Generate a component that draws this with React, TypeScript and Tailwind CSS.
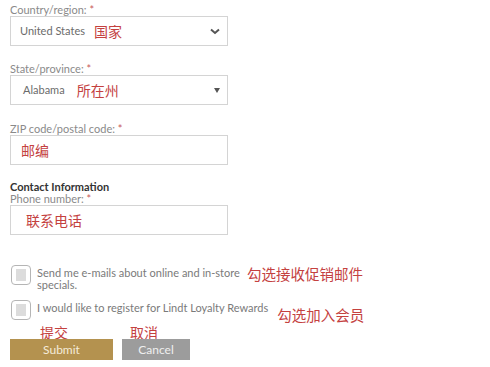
import React from 'react';

const label = "text-[11px] leading-[12px] text-[#8a8a8a]";
const box = "h-[30px] w-[218px] border border-[#d4d4d4] bg-white flex items-center";
const cn = "font-['Noto_Sans_CJK_SC',sans-serif] text-[#c4413f]";

const Req = () => <span className="text-[#c85a5a]"> *</span>;

const Checkbox = () => (
  <div className="w-[20px] h-[20px] shrink-0 rounded-[4px] border border-[#b5b5b5] bg-white flex items-center justify-center">
    <div className="w-[10px] h-[12px] bg-[#dcdcdc]" />
  </div>
);

export default function App() {
  return (
    <div className="w-[490px] h-[367px] bg-white pl-[10px] pt-[4px] font-['Lato',sans-serif] overflow-hidden">
      {/* Country */}
      <div className={label}>Country/region:<Req /></div>
      <div className={box + " pl-[9px] pr-[7px]"}>
        <span className="text-[11px] text-[#6b6b6b]">United States</span>
        <span className={cn + " text-[14px] ml-[9px]"}>国家</span>
        <svg className="ml-auto" width="10" height="7" viewBox="0 0 10 7">
          <path d="M1 1.5 L5 5 L9 1.5" fill="none" stroke="#555" strokeWidth="2" />
        </svg>
      </div>

      {/* State */}
      <div className={label + " mt-[17px]"}>State/province:<Req /></div>
      <div className={box + " pl-[12px] pr-[7px]"}>
        <span className="text-[11px] text-[#6b6b6b]">Alabama</span>
        <span className={cn + " text-[14px] ml-[12px]"}>所在州</span>
        <svg className="ml-auto" width="6" height="5" viewBox="0 0 6 5">
          <path d="M0 0 L6 0 L3 5 Z" fill="#555" />
        </svg>
      </div>

      {/* ZIP */}
      <div className={label + " mt-[18px]"}>ZIP code/postal code:<Req /></div>
      <div className={box + " pl-[10px]"}>
        <span className={cn + " text-[14px]"}>邮编</span>
      </div>

      {/* Contact */}
      <div className="mt-[16px] text-[11px] leading-[12px] font-bold text-[#333]">Contact Information</div>
      <div className={label}>Phone number:<Req /></div>
      <div className={box + " pl-[15px]"}>
        <span className={cn + " text-[14px]"}>联系电话</span>
      </div>

      {/* Checkboxes */}
      <div className="mt-[30px] flex items-start pl-[1px]">
        <Checkbox />
        <div className="ml-[6px] w-[205px] whitespace-nowrap text-[11px] leading-[12px] text-[#7a7a7a] pt-[2px]">
          Send me e-mails about online and in-store<br />specials.
        </div>
        <span className={cn + " text-[14.5px] leading-[16px] ml-[5px] pt-[1px]"}>勾选接收促销邮件</span>
      </div>
      <div className="mt-[9px] flex items-start pl-[1px]">
        <Checkbox />
        <div className="ml-[6px] whitespace-nowrap text-[11px] leading-[12px] text-[#7a7a7a] pt-[2px]">
          I would like to register for Lindt Loyalty Rewards
        </div>
        <span className={cn + " text-[14.5px] leading-[16px] ml-[9px] mt-[7px]"}>勾选加入会员</span>
      </div>

      {/* Buttons */}
      <div className="mt-[1px] flex">
        <div className="w-[103px] flex flex-col items-start">
          <span className={cn + " text-[14px] leading-[16px] -mb-[1px] ml-[30px]"}>提交</span>
          <div className="w-full h-[21px] bg-[#b4924f] text-[12px] text-[#f5ecd9] flex items-center justify-center">Submit</div>
        </div>
        <div className="ml-[9px] w-[68px] flex flex-col items-start">
          <span className={cn + " text-[14px] leading-[16px] -mb-[1px] ml-[8px]"}>取消</span>
          <div className="w-full h-[21px] bg-[#9c9c9c] text-[12px] text-[#efefef] flex items-center justify-center">Cancel</div>
        </div>
      </div>
    </div>
  );
}
